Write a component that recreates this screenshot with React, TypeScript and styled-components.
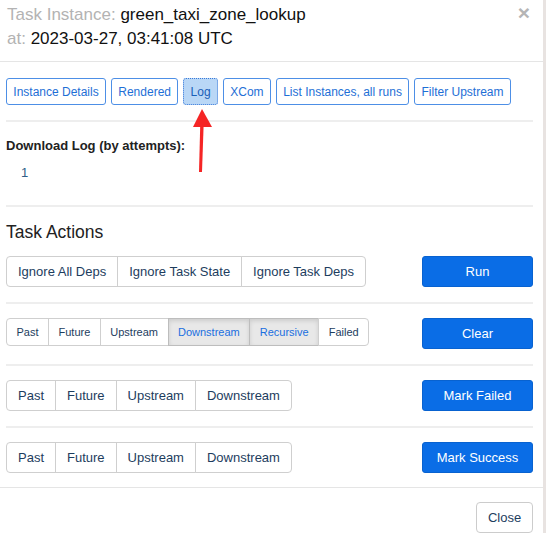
import React, { useState } from "react";
import styled, { createGlobalStyle, css } from "styled-components";

const GlobalStyle = createGlobalStyle`
  html, body {
    margin: 0;
    padding: 0;
    background: #e8e3e1;
  }
  body {
    font-family: "Liberation Sans", Arial, Helvetica, sans-serif;
  }
`;

const Modal = styled.div`
  position: relative;
  width: 543px;
  height: 533px;
  background: #fff;
  overflow: hidden;
`;

const Header = styled.div`
  position: relative;
  padding: 3px 7px 10px;
  border-bottom: 1px solid #e5e5e5;
`;

const TitleLine = styled.div`
  font-size: 17px;
  line-height: 24px;
  color: #111;
`;

const Label = styled.span`
  color: #b3b3b3;
`;

const CloseX = styled.button`
  position: absolute;
  top: 2px;
  right: 13px;
  border: none;
  background: none;
  padding: 0;
  font-family: "Liberation Sans", Arial, sans-serif;
  font-size: 21px;
  font-weight: bold;
  line-height: 21px;
  color: #b5b5b5;
  cursor: pointer;
`;

const Body = styled.div`
  padding: 16px 10px 0 6px;
`;

const NavRow = styled.div`
  display: flex;
  gap: 5px;
`;

const NavButton = styled.button<{ $active?: boolean }>`
  height: 27px;
  padding: 0 6.3px;
  font-family: "Liberation Sans", Arial, sans-serif;
  font-size: 12px;
  color: #1e6fd6;
  background: #fff;
  border: 1px solid #4d8fe6;
  border-radius: 3px;
  cursor: pointer;
  ${(p) =>
    p.$active &&
    css`
      background: #b9d7f6;
      border: 1px dotted #3a7ad9;
      color: #1a5fb8;
    `}
`;

const Divider = styled.hr`
  margin: 14.5px 0;
  border: none;
  border-top: 2px solid #eeeeee;
`;

const SubTitle = styled.div`
  margin-top: 15px;
  font-size: 13px;
  line-height: 18px;
  font-weight: bold;
  color: #222;
`;

const AttemptLink = styled.a`
  display: block;
  margin: 9px 0 23px 15px;
  font-size: 13px;
  line-height: 18px;
  color: #2f5d87;
  text-decoration: none;
`;

const SectionTitle = styled.h3`
  margin: 11px 0 13px;
  font-size: 17.5px;
  line-height: 22px;
  font-weight: normal;
  color: #222;
`;

const ActionRow = styled.div`
  display: flex;
  align-items: flex-start;
  justify-content: space-between;
`;

const Group = styled.div`
  display: flex;
`;

const GroupButton = styled.button<{ $size: "sm" | "md"; $active?: boolean }>`
  height: ${(p) => (p.$size === "sm" ? "28px" : "31px")};
  padding: ${(p) => (p.$size === "sm" ? "0 9.5px" : "0 11px")};
  font-family: "Liberation Sans", Arial, sans-serif;
  font-size: ${(p) => (p.$size === "sm" ? "11px" : "13px")};
  color: #1d3d5e;
  background: #fff;
  border: 1px solid #cfcfcf;
  border-radius: 0;
  margin-left: -1px;
  cursor: pointer;
  &:first-child {
    margin-left: 0;
    border-radius: 4px 0 0 4px;
  }
  &:last-child {
    border-radius: 0 4px 4px 0;
  }
  ${(p) =>
    p.$active &&
    css`
      background: #e8e8e8;
      color: #1a6fe0;
      border-color: #bdbdbd;
      box-shadow: inset 0 2px 4px rgba(0, 0, 0, 0.12);
    `}
`;

const PrimaryButton = styled.button`
  width: 111px;
  height: 31px;
  font-family: "Liberation Sans", Arial, sans-serif;
  font-size: 13px;
  color: #fff;
  background: #0a6de6;
  border: 1px solid #0862d0;
  border-radius: 3px;
  cursor: pointer;
`;

const Footer = styled.div`
  margin-top: 14px;
  border-top: 1px solid #e5e5e5;
  padding: 14px 10px 0 0;
  display: flex;
  justify-content: flex-end;
`;

const DefaultButton = styled.button`
  width: 57px;
  height: 31px;
  font-family: "Liberation Sans", Arial, sans-serif;
  font-size: 13px;
  color: #1d3d5e;
  background: #fff;
  border: 1px solid #cccccc;
  border-radius: 4px;
  cursor: pointer;
`;

const Arrow = styled.svg`
  position: absolute;
  left: 190px;
  top: 108px;
  pointer-events: none;
`;

const navItems = [
  "Instance Details",
  "Rendered",
  "Log",
  "XCom",
  "List Instances, all runs",
  "Filter Upstream",
];

const App: React.FC = () => {
  const [clearOpts, setClearOpts] = useState<string[]>(["Downstream", "Recursive"]);

  const toggleClear = (name: string) => {
    setClearOpts((prev) =>
      prev.includes(name) ? prev.filter((n) => n !== name) : [...prev, name]
    );
  };

  return (
    <>
      <GlobalStyle />
      <Modal>
        <Header>
          <TitleLine>
            <Label>Task Instance: </Label>green_taxi_zone_lookup
          </TitleLine>
          <TitleLine>
            <Label>at: </Label>2023-03-27, 03:41:08 UTC
          </TitleLine>
          <CloseX>×</CloseX>
        </Header>

        <Body>
          <NavRow>
            {navItems.map((item) => (
              <NavButton key={item} $active={item === "Log"}>
                {item}
              </NavButton>
            ))}
          </NavRow>

          <Divider />
          <SubTitle>Download Log (by attempts):</SubTitle>
          <AttemptLink href="#">1</AttemptLink>
          <Divider />

          <SectionTitle>Task Actions</SectionTitle>
          <ActionRow>
            <Group>
              <GroupButton $size="md">Ignore All Deps</GroupButton>
              <GroupButton $size="md">Ignore Task State</GroupButton>
              <GroupButton $size="md">Ignore Task Deps</GroupButton>
            </Group>
            <PrimaryButton>Run</PrimaryButton>
          </ActionRow>

          <Divider />
          <ActionRow>
            <Group>
              {["Past", "Future", "Upstream", "Downstream", "Recursive", "Failed"].map((o) => (
                <GroupButton
                  key={o}
                  $size="sm"
                  $active={clearOpts.includes(o)}
                  onClick={() => toggleClear(o)}
                >
                  {o}
                </GroupButton>
              ))}
            </Group>
            <PrimaryButton>Clear</PrimaryButton>
          </ActionRow>

          <Divider />
          <ActionRow>
            <Group>
              {["Past", "Future", "Upstream", "Downstream"].map((o) => (
                <GroupButton key={o} $size="md">
                  {o}
                </GroupButton>
              ))}
            </Group>
            <PrimaryButton>Mark Failed</PrimaryButton>
          </ActionRow>

          <Divider />
          <ActionRow>
            <Group>
              {["Past", "Future", "Upstream", "Downstream"].map((o) => (
                <GroupButton key={o} $size="md">
                  {o}
                </GroupButton>
              ))}
            </Group>
            <PrimaryButton>Mark Success</PrimaryButton>
          </ActionRow>
        </Body>

        <Footer>
          <DefaultButton>Close</DefaultButton>
        </Footer>

        <Arrow width="24" height="66" viewBox="0 0 24 66">
          <polygon points="12,1 3,19 22,19" fill="#f52525" />
          <polygon points="10.2,18 13.6,18 12,64 9,64" fill="#f52525" />
        </Arrow>
      </Modal>
    </>
  );
};

export default App;
